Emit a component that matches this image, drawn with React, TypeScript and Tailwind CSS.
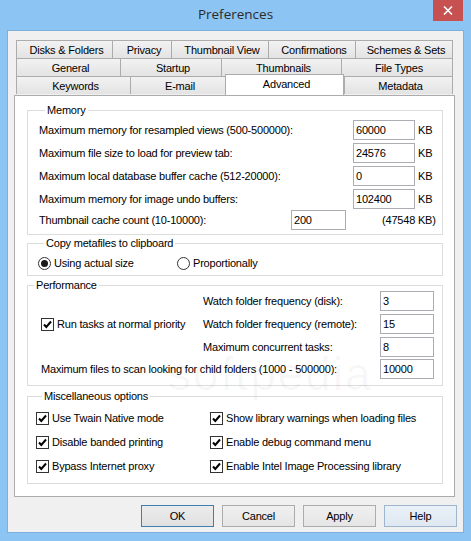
import React from 'react'

type Tab = { label: string; w: string }

const row1: Tab[] = [
  { label: 'Disks & Folders', w: 'w-[96px]' },
  { label: 'Privacy', w: 'w-[59px]' },
  { label: 'Thumbnail View', w: 'w-[97px]' },
  { label: 'Confirmations', w: 'w-[87px]' },
  { label: 'Schemes & Sets', w: 'w-[98px]' },
]

const row2: Tab[] = [
  { label: 'General', w: 'w-[104px]' },
  { label: 'Startup', w: 'w-[101px]' },
  { label: 'Thumbnails', w: 'w-[120px]' },
  { label: 'File Types', w: 'w-[112px]' },
]

function TabItem({ tab, last }: { tab: Tab; last?: boolean }) {
  return (
    <div
      className={`${tab.w} h-[18px] border-t border-l border-[#acacac] ${last ? 'border-r' : ''} bg-linear-to-b from-[#f2f2f2] to-[#e3e3e3] flex items-center justify-center leading-[14px] pl-[4px]`}
    >
      {tab.label}
    </div>
  )
}

function Field({ value, w }: { value: string; w: string }) {
  return (
    <input
      readOnly
      value={value}
      className={`${w} h-[20px] border border-[#abadb3] bg-white pl-[2px] leading-[14px] text-black outline-none`}
    />
  )
}

function Check({ label }: { label: string }) {
  return (
    <div className="flex items-center h-[16px]">
      <span className="w-[13px] h-[13px] border border-[#333333] bg-white flex items-center justify-center shrink-0">
        <svg width="11" height="11" viewBox="0 0 11 11">
          <path d="M2 5.5 L4.3 8 L9 2.5" stroke="#000" strokeWidth="2" fill="none" />
        </svg>
      </span>
      <span className="ml-[3px] whitespace-nowrap">{label}</span>
    </div>
  )
}

function Radio({ label, checked }: { label: string; checked?: boolean }) {
  return (
    <div className="flex items-center h-[16px]">
      <span className="w-[13px] h-[13px] rounded-full border border-[#333333] bg-white flex items-center justify-center shrink-0">
        {checked && <span className="w-[7px] h-[7px] rounded-full bg-[#1a1a1a]" />}
      </span>
      <span className="ml-[3px] whitespace-nowrap">{label}</span>
    </div>
  )
}

function Legend({ children }: { children: React.ReactNode }) {
  return <legend className="ml-[6px] px-[2px] leading-[12px]">{children}</legend>
}

export default function App() {
  const memRows = [
    ['Maximum memory for resampled views (500-500000):', '60000'],
    ['Maximum file size to load for preview tab:', '24576'],
    ['Maximum local database buffer cache (512-20000):', '0'],
    ['Maximum memory for image undo buffers:', '102400'],
  ]

  return (
    <div className="w-[471px] h-[541px] bg-[#8cc4f3] relative overflow-hidden font-['Liberation_Sans',Arial,sans-serif] text-[11px] tracking-[-0.2px] text-black">
      {/* title bar */}
      <div className="h-[30px] flex items-center justify-center">
        <span className="font-['Open_Sans',sans-serif] text-[13.5px] tracking-normal text-[#2b2b2b] pb-[1px]">Preferences</span>
      </div>
      <div className="absolute top-0 right-[8px] w-[30px] h-[21px] bg-[#c75050] flex items-center justify-center">
        <svg width="10" height="9" viewBox="0 0 10 9">
          <path d="M1 0.5 L9 8.5 M9 0.5 L1 8.5" stroke="#fff" strokeWidth="1.6" />
        </svg>
      </div>

      {/* client area */}
      <div className="ml-[7px] w-[457px] h-[503px] border border-[#7fb0dc] bg-[#f0f0f0] pt-[9px]">
        {/* tabs */}
        <div className="ml-[8px] flex flex-col">
          <div className="flex">
            {row1.map((t, i) => (
              <TabItem key={t.label} tab={t} last={i === row1.length - 1} />
            ))}
          </div>
          <div className="flex">
            {row2.map((t, i) => (
              <TabItem key={t.label} tab={t} last={i === row2.length - 1} />
            ))}
          </div>
          <div className="flex items-start">
            <TabItem tab={{ label: 'Keywords', w: 'w-[114px]' }} />
            <TabItem tab={{ label: 'E-mail', w: 'w-[95px]' }} />
            <div className="relative z-10 w-[119px] h-[21px] -mt-[2px] border-t border-l border-r border-[#acacac] bg-white flex justify-center pt-[2px] pl-[4px] leading-[14px]">
              Advanced
            </div>
            <TabItem tab={{ label: 'Metadata', w: 'w-[109px]' }} last />
          </div>
        </div>

        {/* panel */}
        <div className="ml-[6px] w-[441px] h-[402px] border border-[#acacac] bg-white">
          {/* Memory */}
          <fieldset className="ml-[12px] mt-[8px] w-[416px] border border-[#dcdcdc] pl-[11px] pt-[4px] pb-[4px]">
            <Legend>Memory</Legend>
            {memRows.map(([label, v], i) => (
              <div key={label} className={`flex items-center h-[20px] ${i > 0 ? 'mt-[3px]' : ''}`}>
                <span className="w-[314px] whitespace-nowrap">{label}</span>
                <Field value={v} w="w-[62px]" />
                <span className="ml-[3px]">KB</span>
              </div>
            ))}
            <div className="flex items-center h-[20px] mt-[1px]">
              <span className="w-[252px] whitespace-nowrap">Thumbnail cache count (10-10000):</span>
              <Field value="200" w="w-[55px]" />
              <span className="ml-[36px]">(47548 KB)</span>
            </div>
          </fieldset>

          {/* Copy metafiles */}
          <fieldset className="ml-[12px] mt-[2px] w-[416px] border border-[#dcdcdc] pl-[10px] pt-[6px] pb-[4px]">
            <Legend>Copy metafiles to clipboard</Legend>
            <div className="flex">
              <div className="w-[139px]">
                <Radio label="Using actual size" checked />
              </div>
              <Radio label="Proportionally" />
            </div>
          </fieldset>

          {/* Performance */}
          <fieldset className="ml-[12px] mt-[3px] w-[416px] border border-[#dcdcdc] pb-[6px]">
            <Legend>Performance</Legend>
            <div className="flex">
              <div className="w-[175px] pl-[13px] flex items-center">
                <Check label="Run tasks at normal priority" />
              </div>
              <div className="flex flex-col">
                <div className="flex items-center h-[20px]">
                  <span className="w-[177px] whitespace-nowrap">Watch folder frequency (disk):</span>
                  <Field value="3" w="w-[54px]" />
                </div>
                <div className="flex items-center h-[20px] mt-[3px]">
                  <span className="w-[177px] whitespace-nowrap">Watch folder frequency (remote):</span>
                  <Field value="15" w="w-[54px]" />
                </div>
                <div className="flex items-center h-[20px] mt-[3px]">
                  <span className="w-[177px] whitespace-nowrap">Maximum concurrent tasks:</span>
                  <Field value="8" w="w-[54px]" />
                </div>
              </div>
            </div>
            <div className="flex items-center h-[20px] mt-[2px] pl-[13px]">
              <span className="w-[339px] whitespace-nowrap">Maximum files to scan looking for child folders (1000 - 500000):</span>
              <Field value="10000" w="w-[54px]" />
            </div>
          </fieldset>

          {/* Misc */}
          <fieldset className="ml-[12px] mt-[4px] w-[416px] border border-[#dcdcdc] pl-[8px] pt-[8px] pb-[9px]">
            <Legend>Miscellaneous options</Legend>
            <div className="grid grid-cols-[174px_1fr] gap-y-[8px]">
              <Check label="Use Twain Native mode" />
              <Check label="Show library warnings when loading files" />
              <Check label="Disable banded printing" />
              <Check label="Enable debug command menu" />
              <Check label="Bypass Internet proxy" />
              <Check label="Enable Intel Image Processing library" />
            </div>
          </fieldset>
        </div>

        {/* buttons */}
        <div className="flex justify-end gap-[8px] pr-[6px] mt-[8px]">
          <button className="w-[73px] h-[22px] border border-[#3c7fb1] bg-linear-to-b from-[#ececec] to-[#e0e0e0]">OK</button>
          <button className="w-[73px] h-[22px] border border-[#acacac] bg-linear-to-b from-[#f0f0f0] to-[#e5e5e5]">Cancel</button>
          <button className="w-[73px] h-[22px] border border-[#acacac] bg-linear-to-b from-[#f0f0f0] to-[#e5e5e5]">Apply</button>
          <button className="w-[73px] h-[22px] border border-[#9db6cf] bg-linear-to-b from-[#eaf1f8] to-[#dfe8f1]">Help</button>
        </div>
      </div>

      {/* watermark */}
      <div className="absolute left-[168px] top-[340px] text-[46px] text-black/[0.035] pointer-events-none font-['Liberation_Sans',sans-serif] tracking-[2px]">
        softpedia
      </div>
    </div>
  )
}
